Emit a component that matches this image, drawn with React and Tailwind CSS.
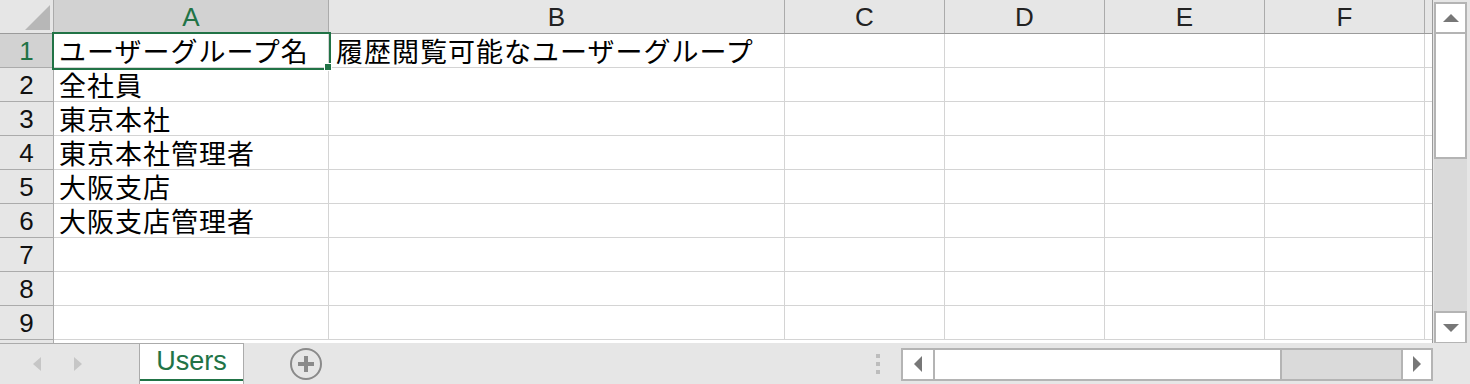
import React from "react";

const cols = [
  { k: "A", w: "w-[275px]" },
  { k: "B", w: "w-[456px]" },
  { k: "C", w: "w-[160px]" },
  { k: "D", w: "w-[160px]" },
  { k: "E", w: "w-[160px]" },
  { k: "F", w: "w-[160px]" },
];

const data = [
  ["ユーザーグループ名", "履歴閲覧可能なユーザーグループ"],
  ["全社員", ""],
  ["東京本社", ""],
  ["東京本社管理者", ""],
  ["大阪支店", ""],
  ["大阪支店管理者", ""],
  ["", ""],
  ["", ""],
  ["", ""],
];

const jp = { fontFamily: '"Noto Sans CJK JP", "Noto Sans", sans-serif' };
const lat = { fontFamily: '"Liberation Sans", Arial, sans-serif' };

function HeaderRow() {
  return (
    <div className="flex h-[34px] shrink-0 border-b border-[#9b9b9b] bg-[#e6e6e6]">
      <div className="relative w-[54px] shrink-0 border-r border-[#ababab]">
        <svg className="absolute left-[25px] top-[5px]" width="25" height="25" viewBox="0 0 25 25">
          <polygon points="25,0 25,25 0,25" fill="#b7b7b7" />
        </svg>
      </div>
      {cols.map((c, i) => (
        <div
          key={c.k}
          className={`${c.w} shrink-0 border-r border-[#ababab] flex items-center justify-center text-[26px] leading-none ${
            i === 0 ? "bg-[#d2d2d2] text-[#217346]" : "text-[#222]"
          }`}
          style={lat}
        >
          {c.k}
        </div>
      ))}
      <div className="w-[7px] shrink-0" />
    </div>
  );
}

function Row({ n, a, b }) {
  return (
    <div className="flex h-[34px] shrink-0">
      <div
        className={`w-[54px] shrink-0 border-r border-b border-[#ababab] flex items-center justify-center text-[26px] leading-none ${
          n === 1 ? "bg-[#d2d2d2] text-[#217346]" : "bg-[#e6e6e6] text-[#111]"
        }`}
        style={lat}
      >
        {n}
      </div>
      <div
        className="w-[275px] shrink-0 border-r border-b border-[#d4d4d4] bg-white pl-[5px] flex items-center text-[27px] leading-[26px] tracking-[1px] text-black whitespace-nowrap"
        style={jp}
      >
        {a}
      </div>
      <div
        className="w-[456px] shrink-0 border-r border-b border-[#d4d4d4] bg-white pl-[7px] flex items-center text-[27px] leading-[26px] tracking-[1px] text-black whitespace-nowrap"
        style={jp}
      >
        {b}
      </div>
      {cols.slice(2).map((c) => (
        <div key={c.k} className={`${c.w} shrink-0 border-r border-b border-[#d4d4d4] bg-white`} />
      ))}
      <div className="w-[7px] shrink-0 border-b border-[#d4d4d4] bg-white" />
    </div>
  );
}

function VScroll() {
  return (
    <div className="w-[37px] shrink-0 bg-[#e6e6e6] pl-[1px] pt-[2px] pr-[3px] h-[343px]">
      <div className="flex h-[342px] flex-col">
        <div className="h-[32px] shrink-0 border-2 border-[#b4b4b4] bg-white flex items-center justify-center">
          <svg width="16" height="8" viewBox="0 0 16 8"><polygon points="8,0 16,8 0,8" fill="#777" /></svg>
        </div>
        <div className="h-[125px] shrink-0 border-2 border-t-0 border-[#b4b4b4] bg-white" />
        <div className="flex-1 bg-[#dadada]" />
        <div className="h-[33px] shrink-0 border-2 border-[#b4b4b4] bg-white flex items-center justify-center">
          <svg width="16" height="8" viewBox="0 0 16 8"><polygon points="0,0 16,0 8,8" fill="#777" /></svg>
        </div>
      </div>
    </div>
  );
}

function TabBar() {
  return (
    <div className="flex h-[41px] shrink-0 bg-[#e6e6e6]">
      <div className="flex w-[139px] shrink-0 items-center border-t border-[#ababab] pl-[33px]">
        <svg width="8" height="14" viewBox="0 0 8 14"><polygon points="8,0 8,14 0,7" fill="#c6c6c6" /></svg>
        <svg className="ml-[33px]" width="8" height="14" viewBox="0 0 8 14"><polygon points="0,0 0,14 8,7" fill="#c6c6c6" /></svg>
      </div>
      <div className="flex w-[105px] shrink-0 flex-col border-x border-t border-[#ababab] bg-white">
        <div
          className="flex flex-1 items-center justify-center text-[27px] leading-none text-[#217346]"
          style={lat}
        >
          Users
        </div>
        <div className="mb-[3px] h-[2px] bg-[#217346]" />
      </div>
      <div className="flex flex-1 items-center border-t border-transparent">
        <div className="ml-[46px] flex h-[32px] w-[32px] items-center justify-center rounded-full border-2 border-[#8a8a8a]">
          <svg width="18" height="18" viewBox="0 0 18 18">
            <rect x="7" y="1" width="4" height="16" fill="#8a8a8a" />
            <rect x="1" y="7" width="16" height="4" fill="#8a8a8a" />
          </svg>
        </div>
        <div className="ml-[554px] flex flex-col gap-[4px]">
          <div className="h-[4px] w-[4px] bg-[#bdbdbd]" />
          <div className="h-[4px] w-[4px] bg-[#bdbdbd]" />
          <div className="h-[4px] w-[4px] bg-[#bdbdbd]" />
        </div>
        <div className="ml-[21px] flex h-[33px] w-[532px] border-2 border-[#b4b4b4]">
          <div className="flex w-[30px] shrink-0 items-center justify-center bg-white">
            <svg width="8" height="16" viewBox="0 0 8 16"><polygon points="8,0 8,16 0,8" fill="#777" /></svg>
          </div>
          <div className="w-[349px] shrink-0 border-x-2 border-[#b4b4b4] bg-white" />
          <div className="flex-1 bg-[#dadada]" />
          <div className="flex w-[30px] shrink-0 items-center justify-center border-l-2 border-[#b4b4b4] bg-white">
            <svg width="8" height="16" viewBox="0 0 8 16"><polygon points="0,0 0,16 8,8" fill="#777" /></svg>
          </div>
        </div>
      </div>
    </div>
  );
}

export default function App() {
  return (
    <div className="relative flex h-[384px] w-[1470px] flex-col overflow-hidden bg-[#e6e6e6]">
      <div className="flex h-[343px] shrink-0">
        <div className="relative flex h-[343px] w-[1433px] shrink-0 flex-col overflow-hidden border-r border-[#9b9b9b] bg-white">
          <HeaderRow />
          {data.map((r, i) => (
            <Row key={i} n={i + 1} a={r[0]} b={r[1]} />
          ))}
          <div className="flex h-[4px] shrink-0">
            <div className="w-[54px] shrink-0 border-r border-[#ababab] bg-[#e6e6e6]" />
            <div className="flex-1 bg-white" />
          </div>
          <div className="pointer-events-none absolute left-[52px] top-[32px] h-[38px] w-[279px] border-2 border-[#217346]" />
          <div className="pointer-events-none absolute left-[324px] top-[63px] h-[8px] w-[8px] border border-white bg-[#217346]" />
        </div>
        <VScroll />
      </div>
      <TabBar />
    </div>
  );
}
